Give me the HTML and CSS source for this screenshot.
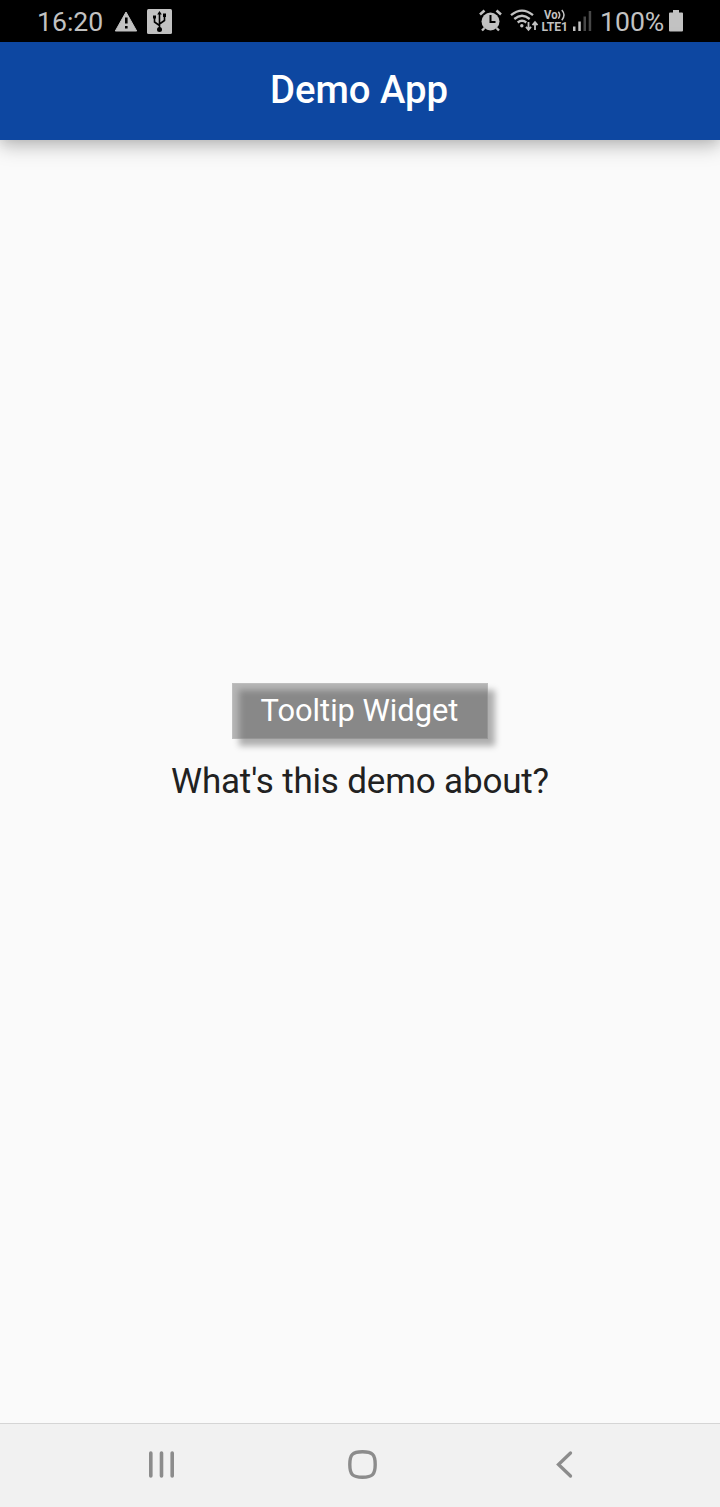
FILE: index.html
```html
<!DOCTYPE html>
<html lang="en">
<head>
<meta charset="utf-8">
<title>Demo App</title>
<link rel="stylesheet" href="styles.css">
</head>
<body>
<div class="screen">
  <div class="status-bar">
    <span class="clock">16:20</span>
    <svg class="notices" width="60" height="42" viewBox="114 0 60 42">
      <path d="M126 12L136.700 31H115.300Z" fill="#c2c2c2" stroke="#c2c2c2" stroke-linejoin="round"/>
      <path d="M126.300 17.500v6M126.300 26v2.500" stroke="#000" stroke-width="2.600"/>
      <rect x="147" y="9" width="25" height="25" rx="1.500" fill="#c2c2c2"/>
      <g fill="none" stroke="#000" stroke-width="1.600">
        <path d="M159.500 13v16M159.500 25.500l-5-3.500v-4M159.500 24l5-3.500v-4"/>
      </g>
      <path d="M159.500 11l2.300 3.500h-4.600zM153 15.500h3v3h-3zM163 13.500h3v3.500h-3z"/>
      <circle cx="159.500" cy="29.600" r="2.500"/>
    </svg>
    <svg class="signals" width="120" height="42" viewBox="476 0 120 42">
      <g stroke="#c2c2c2" fill="none">
        <circle cx="490.500" cy="21.500" r="9" fill="#c2c2c2" stroke="none"/>
        <path d="M480 14.500l4.500-4M501 14.500l-4.500-4" stroke-width="2.600"/>
        <path d="M484.500 28l-2.500 2.500M496.500 28l2.500 2.500" stroke-width="2.400"/>
        <path d="M490.500 15v7h5" stroke="#000" stroke-width="2"/>
        <path d="M511 15.200Q522 6 533 15.200M514.300 19Q522 12.600 529.700 19M517.700 22.500Q522 19 526.300 22.500" stroke-width="2.300"/>
        <path d="M528.500 22v7.500M526 26.800l2.500 3 2.500-3M535 30v-7.500M532.500 25.200l2.500-3 2.500 3" stroke-width="1.800"/>
      </g>
      <circle cx="521.800" cy="25.800" r="1.700" fill="#c2c2c2"/>
      <text class="volte" x="544" y="19.300" textLength="13.500" lengthAdjust="spacingAndGlyphs">Vo</text>
      <path d="M558.300 11.800q2.800 3.200 0 6.800M561.800 10q4.400 5 0 10.200" stroke="#c2c2c2" stroke-width="1.500" fill="none"/>
      <text class="volte" x="541.500" y="31" textLength="26.500" lengthAdjust="spacingAndGlyphs">LTE1</text>
      <path d="M573 26.500h2.500v4.500H573zM578.300 21.500h2.500V31h-2.500z" fill="#c2c2c2"/>
      <path d="M583.500 16.500h2.500V31h-2.500zM588.700 11h2.500v20h-2.500z" fill="#484848"/>
    </svg>
    <span class="percent">100%</span>
    <svg class="battery" width="16" height="42" viewBox="668 0 16 42">
      <path d="M673 10h6v2.500h3q1 0 1 1v17q0 1-1 1h-12q-1 0-1-1v-17q0-1 1-1h3z" fill="#c2c2c2"/>
    </svg>
  </div>
  <header class="app-bar"><h1 class="title">Demo App</h1></header>
  <main class="content">
    <div class="tooltip"><span class="tooltip-label">Tooltip Widget</span></div>
    <p class="question">What's this demo about?</p>
  </main>
  <nav class="nav-bar">
    <svg width="28" height="30" viewBox="147 1449 28 30">
      <path d="M150.800 1453v23M161.500 1453v23M172.200 1453v23" stroke="#8c8c8c" stroke-width="3.600" stroke-linecap="round"/>
    </svg>
    <svg class="home" width="30" height="30" viewBox="347 1449 30 30">
      <path d="M362.500 1451.800C372.500 1451.800 375.200 1454.500 375.200 1464.500S372.500 1477.200 362.500 1477.200 349.800 1474.500 349.800 1464.500 352.500 1451.800 362.500 1451.800Z" fill="none" stroke="#8c8c8c" stroke-width="3.400"/>
    </svg>
    <svg width="20" height="30" viewBox="555 1449 20 30">
      <path d="M570.500 1453l-12 11.500 12 11.500" fill="none" stroke="#8c8c8c" stroke-width="3.300" stroke-linecap="round"/>
    </svg>
  </nav>
</div>
</body>
</html>
```
FILE: styles.css
```css
body { margin: 0; font-family: Roboto, sans-serif; }
svg { display: block; flex: none; }
.screen { height: 1507px; display: flex; flex-direction: column; background: #fafafa; }
.status-bar {
  height: 42px; flex: none; display: flex; box-sizing: border-box;
  padding-left: 37px; background: #000; color: #c2c2c2;
  font-size: 26.6px; line-height: 43px; white-space: nowrap;
}
.clock { width: 77px; }
.signals { margin-left: 302px; }
.percent { width: 68px; margin-left: 4px; }
.volte { font: 700 12px Roboto, sans-serif; fill: #c2c2c2; }
.app-bar {
  height: 98px; flex: none; display: flex; align-items: center; justify-content: center;
  background: #0d47a1; color: #fff; position: relative; z-index: 1;
  box-shadow: 0 6px 18px rgba(0,0,0,.26), 0 2px 10px rgba(0,0,0,.06);
}
.title { margin: 0 2px 2px 0; font-size: 38.3px; font-weight: 500; line-height: 46px; }
.content { flex: 1; display: flex; flex-direction: column; align-items: center; padding-top: 543.4px; }
.tooltip {
  width: 256px; height: 56px; position: relative; isolation: isolate;
  display: flex; align-items: center; justify-content: center;
}
.tooltip::before {
  content: ""; position: absolute; z-index: -2; inset: 7px -7px -7px 7px;
  background: rgba(0,0,0,.3); filter: blur(3.2px);
}
.tooltip::after {
  content: ""; position: absolute; z-index: -1; inset: 0;
  background: rgba(80,80,80,.4);
  box-sizing: border-box; border: 1px solid rgba(255,255,255,.12);
}
.tooltip-label { color: #fff; font-size: 30.8px; line-height: 36px; margin: -1.500px 0 0 -1px; }
.question { margin: 21.600px 0 0; font-size: 35px; line-height: 42px; letter-spacing: -.17px; color: #212121; }
.nav-bar {
  height: 84px; flex: none; box-sizing: border-box; display: flex; align-items: center;
  justify-content: space-between; padding: 0 145px 3px 147px;
  background: #f1f1f1; border-top: 1px solid #d5d5d5;
}
.home { margin-right: 6px; }
```
